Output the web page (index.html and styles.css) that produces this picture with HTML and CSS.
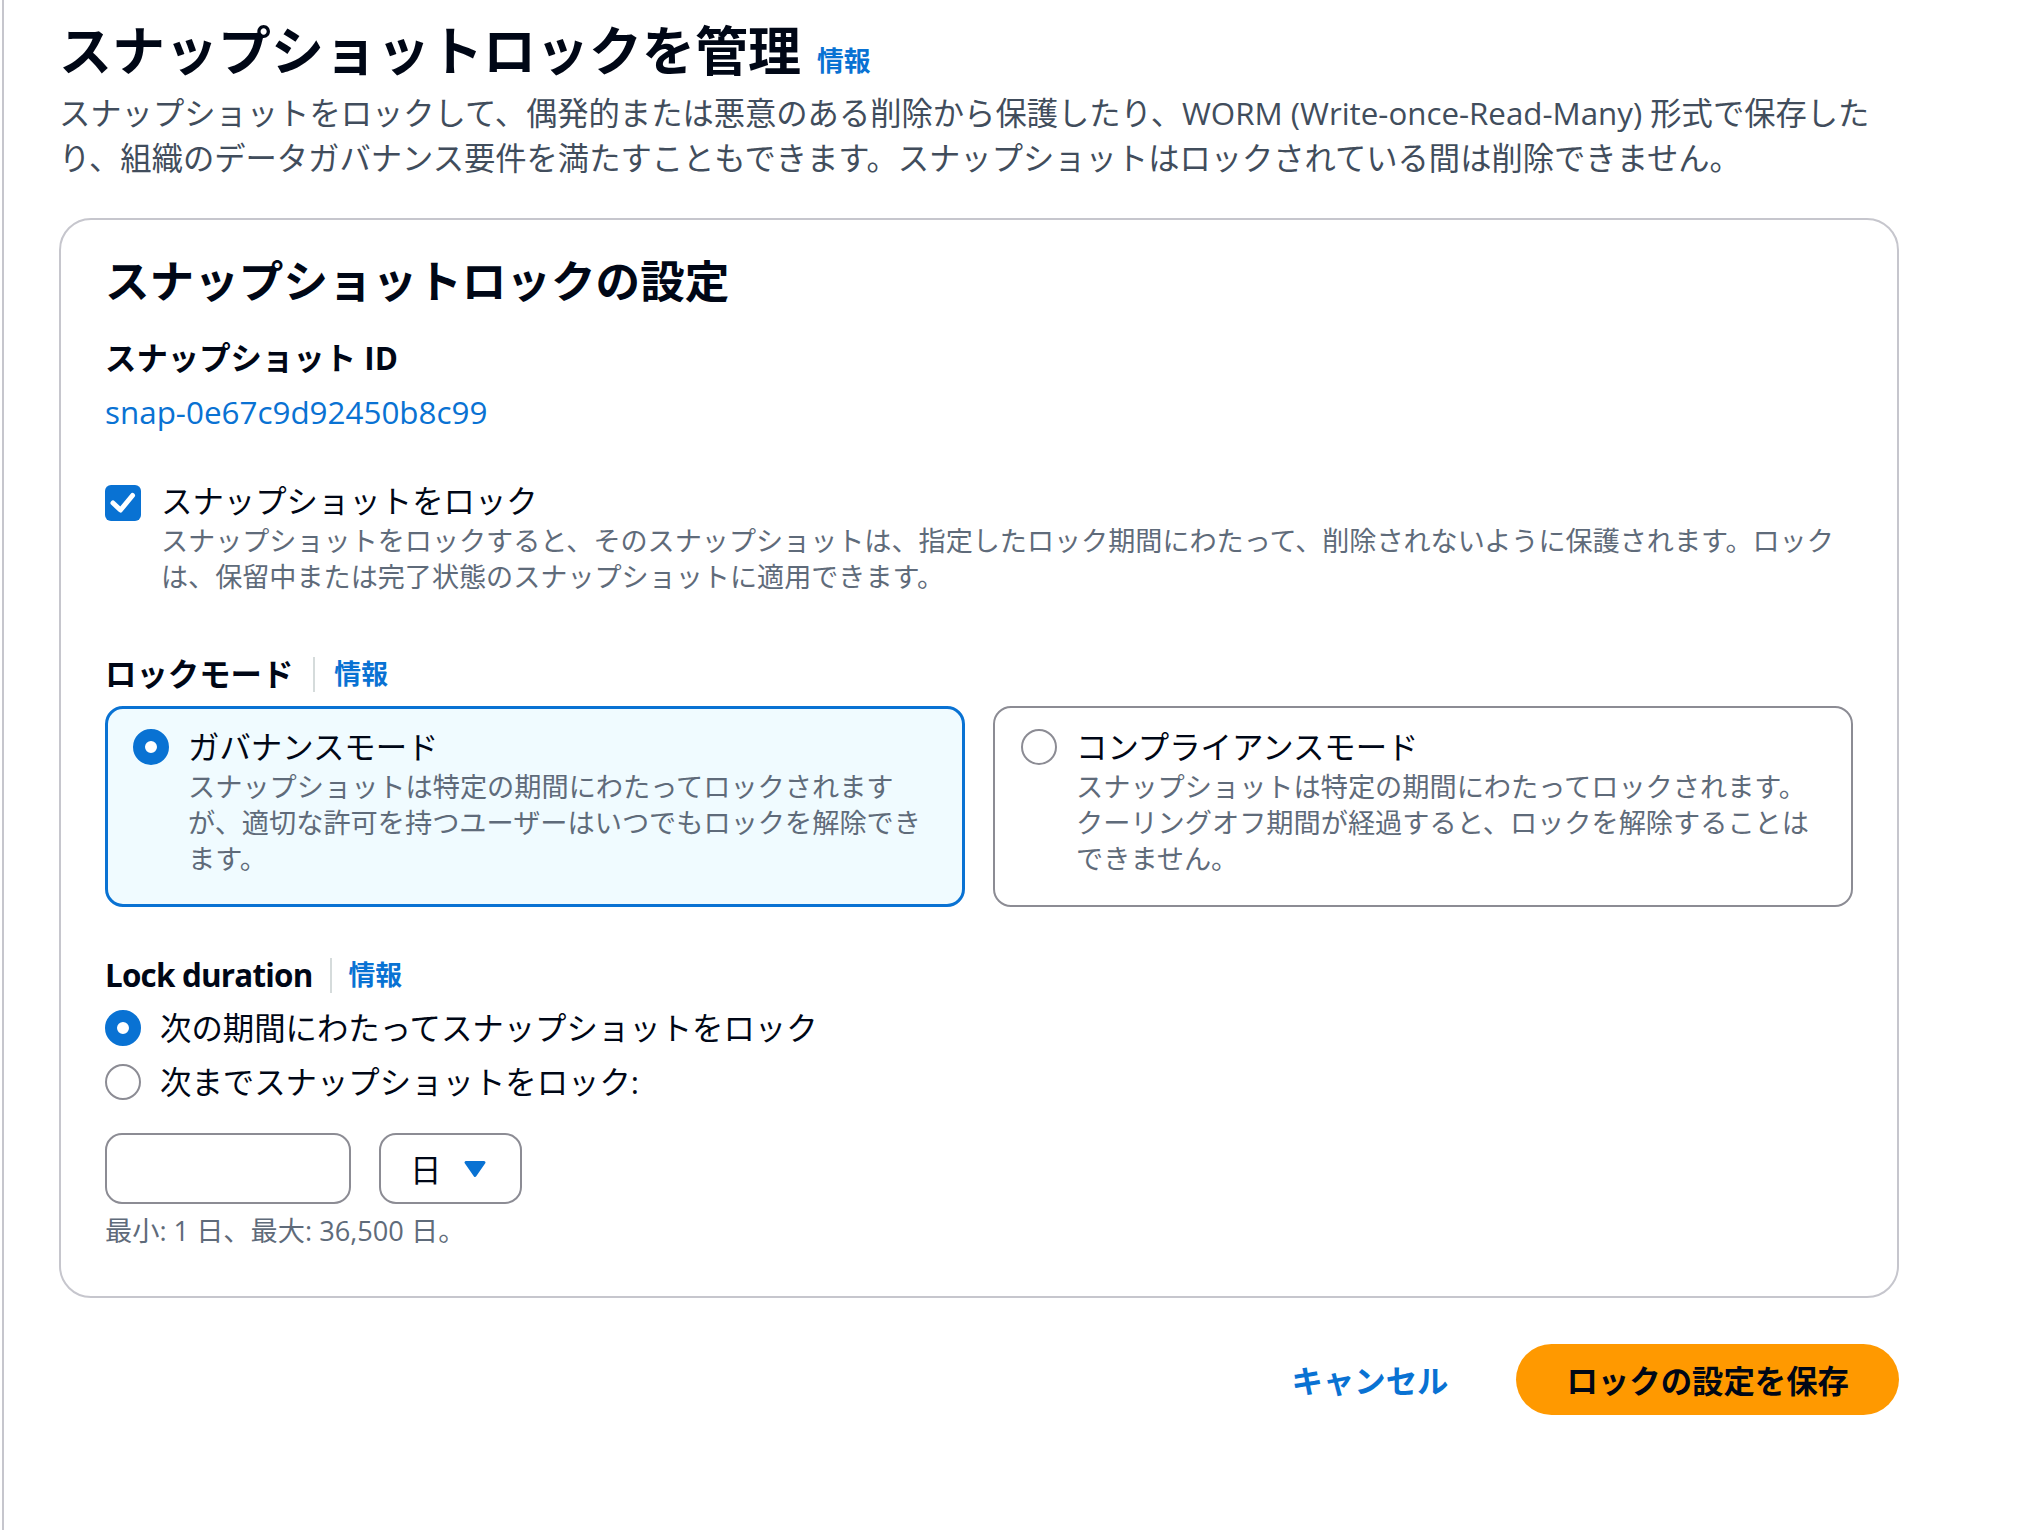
FILE: index.html
```html
<!DOCTYPE html>
<html lang="ja">
<head>
    <meta charset="UTF-8">
    <meta name="viewport" content="width=device-width, initial-scale=1.0">
    <title>スナップショットロックを管理</title>
    <link rel="stylesheet" href="styles.css">
</head>
<body>
    <div class="page">
        <div class="content">
            <header class="page-header">
                <h1 class="page-title">スナップショットロックを管理<a class="info info-title" href="#">情報</a></h1>
                <p class="page-desc">スナップショットをロックして、偶発的または悪意のある削除から保護したり、WORM (Write-once-Read-Many) 形式で保存したり、組織のデータガバナンス要件を満たすこともできます。スナップショットはロックされている間は削除できません。</p>
            </header>

            <section class="card">
                <h2 class="card-title">スナップショットロックの設定</h2>

                <div class="label">スナップショット ID</div>
                <a class="snap-id" href="#">snap-0e67c9d92450b8c99</a>

                <div class="check-row">
                    <span class="checkbox">
                        <svg viewBox="0 0 36 36" width="36" height="36">
                            <polyline points="8,18 15.5,25 27.5,10.5" fill="none" stroke="#fff" stroke-width="5" stroke-linecap="round" stroke-linejoin="round"/>
                        </svg>
                    </span>
                    <div>
                        <div class="check-label">スナップショットをロック</div>
                        <div class="hint check-hint">スナップショットをロックすると、そのスナップショットは、指定したロック期間にわたって、削除されないように保護されます。ロック<br>は、保留中または完了状態のスナップショットに適用できます。</div>
                    </div>
                </div>

                <div class="label-row mode-label">
                    <span class="label">ロックモード</span>
                    <span class="sep"></span>
                    <a class="info" href="#">情報</a>
                </div>

                <div class="tiles">
                    <div class="tile selected">
                        <span class="radio on"></span>
                        <div>
                            <div class="tile-title">ガバナンスモード</div>
                            <div class="hint tile-desc">スナップショットは特定の期間にわたってロックされますが、適切な許可を持つユーザーはいつでもロックを解除できます。</div>
                        </div>
                    </div>
                    <div class="tile">
                        <span class="radio"></span>
                        <div>
                            <div class="tile-title">コンプライアンスモード</div>
                            <div class="hint tile-desc">スナップショットは特定の期間にわたってロックされます。クーリングオフ期間が経過すると、ロックを解除することはできません。</div>
                        </div>
                    </div>
                </div>

                <div class="label-row duration-label">
                    <span class="label latin">Lock duration</span>
                    <span class="sep"></span>
                    <a class="info" href="#">情報</a>
                </div>

                <div class="radio-list">
                    <div class="radio-row"><span class="radio on"></span>次の期間にわたってスナップショットをロック</div>
                    <div class="radio-row"><span class="radio"></span>次までスナップショットをロック:</div>
                </div>

                <div class="duration-row">
                    <div class="text-input"></div>
                    <div class="select">
                        <span>日</span>
                        <svg viewBox="0 0 24 18" width="24" height="18">
                            <path d="M3 2.5 H21 L12 15.5 Z" fill="#0972d3" stroke="#0972d3" stroke-width="3" stroke-linejoin="round"/>
                        </svg>
                    </div>
                </div>
                <div class="hint limits">最小: 1 日、最大: 36,500 日。</div>
            </section>

            <div class="actions">
                <button class="btn-link">キャンセル</button>
                <button class="btn-primary">ロックの設定を保存</button>
            </div>
        </div>
    </div>
</body>
</html>
```

FILE: styles.css
```css
body {
    margin: 0;
    background: #fff;
    font-family: "Open Sans", "Noto Sans CJK JP", sans-serif;
    color: #000716;
    text-spacing-trim: space-all;
}
.page {
    margin-left: 2px;
    border-left: 2px solid #c6c6cd;
    min-height: 100vh;
    padding-left: 55px;
}
.content {
    width: 1840px;
}
a {
    text-decoration: none;
}
.info {
    color: #0972d3;
    font-size: 26.8px;
    line-height: 1;
    font-weight: 700;
}
.info-title {
    margin-left: 16px;
}
.page-header {
    padding-top: 18px;
}
.page-title {
    margin: 0;
    font-size: 53px;
    line-height: 66px;
    font-weight: 700;
}
.page-desc {
    margin: 7px 0 0;
    font-size: 31.3px;
    line-height: 45px;
    color: #414d5c;
}
.card {
    margin-top: 37px;
    border: 2px solid #c6c6cd;
    border-radius: 32px;
    background: #fff;
    padding: 34px 44px 47px;
}
.card-title {
    margin: 0 0 29px;
    font-size: 44.6px;
    line-height: 53px;
    font-weight: 700;
}
.label {
    font-size: 31.4px;
    line-height: 44px;
    font-weight: 700;
}
.latin {
    letter-spacing: -0.8px;
}
.snap-id {
    display: block;
    margin-top: 10px;
    font-size: 31.4px;
    line-height: 44px;
    color: #0972d3;
}
.check-row {
    display: flex;
    align-items: flex-start;
    gap: 20px;
    margin-top: 45px;
}
.checkbox {
    flex: none;
    width: 36px;
    height: 36px;
    margin-top: 6px;
    border-radius: 6px;
    background: #0972d3;
    display: flex;
}
.check-label,
.tile-title {
    font-size: 31.4px;
    line-height: 44px;
}
.hint {
    font-size: 26.8px;
    line-height: 36px;
    color: #5f6b7a;
}
.check-hint {
    font-size: 27.1px;
    white-space: nowrap;
}
.tile-desc {
    font-size: 27.2px;
}
.label-row {
    display: flex;
    align-items: center;
    height: 44px;
}
.sep {
    width: 2px;
    height: 35px;
    background: #d5dbdb;
    margin: 0 19px 0 20px;
}
.mode-label {
    margin-top: 57px;
}
.duration-label .sep {
    margin: 0 17px 0 17px;
}
.tiles {
    display: grid;
    grid-template-columns: 1fr 1fr;
    gap: 28px;
    margin-top: 10px;
}
.tile {
    display: flex;
    align-items: flex-start;
    gap: 19px;
    border: 2px solid #8c8c94;
    border-radius: 18px;
    padding: 17px 35px 28px 26px;
}
.tile.selected {
    border: 3px solid #0972d3;
    background: #f0fbff;
    padding: 16px 34px 27px 25px;
}
.radio {
    flex: none;
    box-sizing: border-box;
    width: 36px;
    height: 36px;
    border-radius: 50%;
    border: 2px solid #8c8c94;
    background: #fff;
    margin-top: 4px;
}
.radio.on {
    border: 12px solid #0972d3;
}
.duration-label {
    margin-top: 46px;
}
.radio-list {
    display: flex;
    flex-direction: column;
    gap: 10px;
    margin-top: 9px;
}
.radio-row {
    display: flex;
    align-items: center;
    gap: 19px;
    font-size: 31.4px;
    line-height: 44px;
}
.radio-row .radio {
    margin-top: 0;
}
.duration-row {
    display: flex;
    gap: 28px;
    margin-top: 29px;
}
.text-input,
.select {
    box-sizing: border-box;
    height: 71px;
    border: 2px solid #8c8c94;
    border-radius: 17px;
    background: #fff;
}
.text-input {
    width: 246px;
}
.select {
    width: 143px;
    display: flex;
    align-items: center;
    gap: 22px;
    padding-left: 29px;
    font-size: 31.4px;
}
.limits {
    margin-top: 9px;
    font-size: 27.2px;
    line-height: 36px;
}
.actions {
    display: flex;
    justify-content: flex-end;
    align-items: center;
    gap: 68px;
    margin-top: 46px;
}
button {
    font-family: inherit;
    font-weight: 700;
    font-size: 31.4px;
    border: none;
    cursor: pointer;
}
.btn-link {
    background: none;
    color: #0972d3;
    padding: 0;
}
.btn-primary {
    height: 71px;
    padding: 0 50px;
    border-radius: 36px;
    background: #ff9900;
    color: #000716;
}
```
